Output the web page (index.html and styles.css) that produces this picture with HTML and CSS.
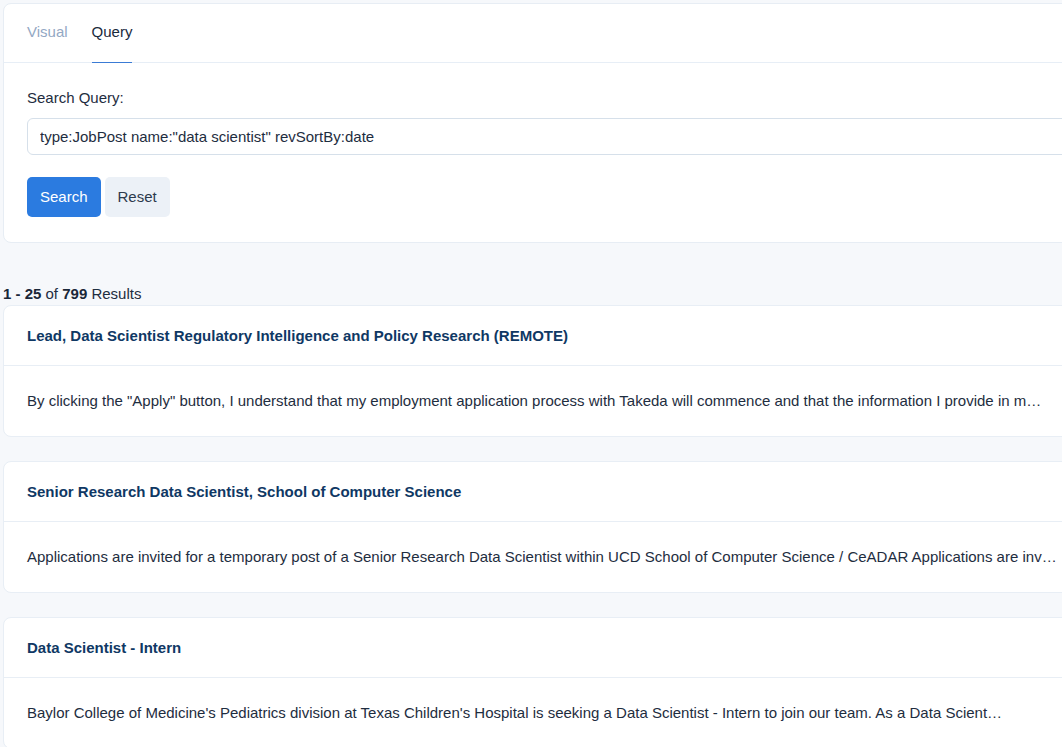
FILE: index.html
```html
<!DOCTYPE html>
<html lang="en">
<head>
<meta charset="utf-8">
<title>Search</title>
<link rel="stylesheet" href="styles.css">
</head>
<body>
<div class="page">
  <section class="search-card">
    <nav class="tabs">
      <span class="tab">Visual</span>
      <span class="tab active">Query</span>
    </nav>
    <div class="search-body">
      <label class="label" for="q">Search Query:</label>
      <input id="q" class="query-input" type="text" value='type:JobPost name:"data scientist" revSortBy:date'>
      <div class="actions">
        <button class="btn btn-primary">Search</button>
        <button class="btn btn-light">Reset</button>
      </div>
    </div>
  </section>

  <p class="summary"><b>1 - 25</b> of <b>799</b> Results</p>

  <article class="result">
    <header class="result-head">Lead, Data Scientist Regulatory Intelligence and Policy Research (REMOTE)</header>
    <div class="result-body">By clicking the "Apply" button, I understand that my employment application process with Takeda will commence and that the information I provide in m…</div>
  </article>

  <article class="result">
    <header class="result-head">Senior Research Data Scientist, School of Computer Science</header>
    <div class="result-body">Applications are invited for a temporary post of a Senior Research Data Scientist within UCD School of Computer Science / CeADAR Applications are inv…</div>
  </article>

  <article class="result">
    <header class="result-head">Data Scientist - Intern</header>
    <div class="result-body">Baylor College of Medicine's Pediatrics division at Texas Children's Hospital is seeking a Data Scientist - Intern to join our team. As a Data Scient…</div>
  </article>
</div>
</body>
</html>
```

FILE: styles.css
```css
html, body {
  margin: 0;
  padding: 0;
  overflow: hidden;
  background: #f6f8fb;
}

body {
  font-family: "Liberation Sans", Arial, Helvetica, sans-serif;
  font-size: 15px;
  line-height: 18px;
  color: #1e2d40;
}

.page {
  width: 1110px;
  padding: 3px 0 0 3px;
}

.search-card {
  background: #fff;
  border: 1px solid #e7edf4;
  border-radius: 8px;
}

.tabs {
  display: flex;
  gap: 24px;
  padding: 0 23px;
  border-bottom: 1px solid #e7eef6;
}

.tab {
  padding: 19px 0 21px;
  color: #93a8c4;
}

.tab.active {
  color: #1a2a3d;
  border-bottom: 1px solid #3a7bd5;
  margin-bottom: -1px;
}

.search-body {
  display: flex;
  flex-direction: column;
  padding: 26px 23px 25px;
}

.label {
  color: #1e2d40;
}

.query-input {
  margin-top: 11px;
  height: 37px;
  box-sizing: border-box;
  border: 1px solid #d6e0ea;
  border-radius: 6px;
  padding: 0 12px;
  font: inherit;
  color: #1e2d40;
  outline: none;
}

.actions {
  display: flex;
  gap: 4px;
  margin-top: 22px;
}

.btn {
  height: 40px;
  border: none;
  border-radius: 5px;
  font: inherit;
  padding: 0 13px;
  cursor: pointer;
}

.btn-primary {
  background: #2b7be0;
  color: #fff;
}

.btn-light {
  background: #ecf1f7;
  color: #2c3a4d;
}

.summary {
  margin: 42px 0 2px;
  color: #1e2d40;
}

.summary b {
  color: #1a2738;
}

.result {
  background: #fff;
  border: 1px solid #e8eef5;
  border-radius: 8px;
  margin-bottom: 24px;
}

.result-head {
  padding: 21px 23px 20px;
  font-weight: bold;
  color: #0f3864;
  border-bottom: 1px solid #e8eef5;
}

.result-body {
  padding: 26px 23px 26px;
  white-space: nowrap;
  overflow: hidden;
  color: #1e2d40;
}
```
